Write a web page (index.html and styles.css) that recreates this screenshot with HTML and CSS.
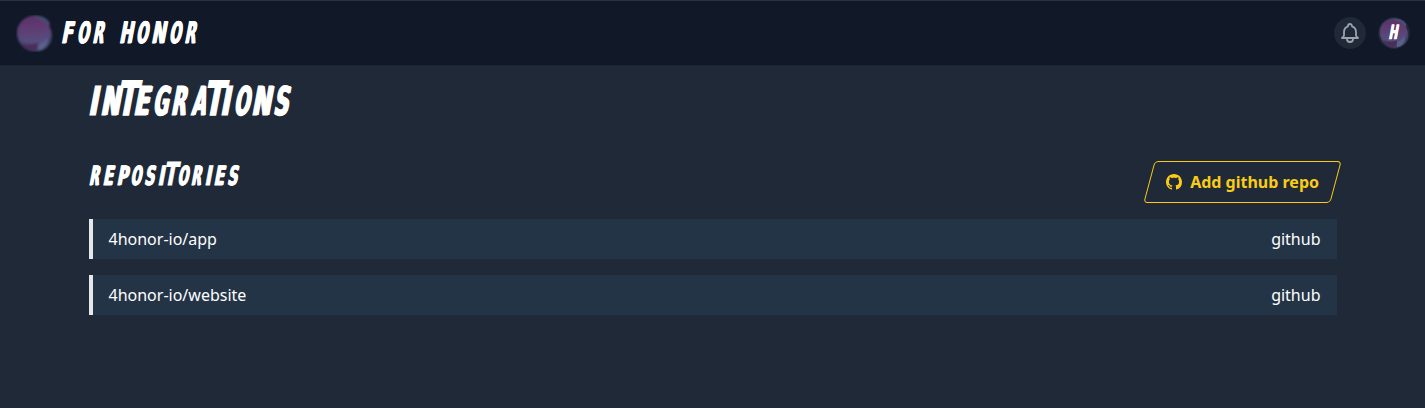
FILE: index.html
```html
<!DOCTYPE html>
<html lang="en">
<head>
<meta charset="utf-8">
<title>For Honor</title>
<link rel="stylesheet" href="styles.css">
</head>
<body>
<svg class="defs" width="0" height="0" aria-hidden="true">
  <defs>
    <linearGradient id="orb-fill" x1=".45" y1="0" x2=".55" y2="1">
      <stop offset="0" stop-color="#60306b"/><stop offset=".35" stop-color="#5f3a71"/><stop offset="1" stop-color="#56507f"/>
    </linearGradient>
    <filter id="soft" x="-20%" y="-20%" width="140%" height="140%"><feGaussianBlur stdDeviation=".8"/></filter>
    <symbol id="orb" viewBox="0 0 36 36">
      <g filter="url(#soft)">
        <path d="M16 .7C23-.4 30 2.6 33 8.4L32 11C36 16 36 23 33 28C29 35 20 37 13 34.7C6 32 1 26 .8 18C.7 9 7 2 16 .7Z" fill="#43436a"/>
        <path d="M15 2C24 1 31 6 33 12C35 19 32 24 27 28C20 27 13 29 5 26C-1 18 1 5 15 2Z" fill="url(#orb-fill)"/>
        <path d="M5 28C12 30 18 28 22 27C22 31 20 34 17 35C11 34 7 32 5 28Z" fill="#4c2d59"/>
        <path d="M18 1C25 0 32 4 33 9L30 10C28 6 24 4 17 2Z" fill="#474d73"/>
        <path d="M22 28C25 28 28 26 31 22C32 28 28 34 22 35C21 32 21 30 22 28Z" fill="#59618b"/>
      </g>
    </symbol>
  </defs>
</svg>
<header class="topbar">
  <a class="brand">
    <svg class="brand-mark" aria-hidden="true"><use href="#orb"/></svg>
    <span class="display brand-name"><span class="word"><i class="f">F</i><i class="o">O</i><i class="r">R</i></span> <span class="word"><i class="h">H</i><i class="o">O</i><i class="n">N</i><i class="o">O</i><i class="r">R</i></span></span>
  </a>
  <div class="actions">
    <button class="bell" aria-label="Notifications">
      <svg width="24" height="24" viewBox="0 0 24 24" fill="none" stroke="currentColor" stroke-width="1.8" stroke-linecap="round" stroke-linejoin="round"><path d="M15 17h5l-1.4-1.4A2 2 0 0 1 18 14.2V11a6 6 0 0 0-4-5.66V5a2 2 0 1 0-4 0v.34A6 6 0 0 0 6 11v3.2a2 2 0 0 1-.6 1.4L4 17h5m6 0v1a3 3 0 1 1-6 0v-1m6 0H9"/></svg>
    </button>
    <div class="avatar">
      <svg class="avatar-orb" aria-hidden="true"><use href="#orb"/></svg>
      <span class="display avatar-letter"><i class="h">H</i></span>
    </div>
  </div>
</header>
<main class="content">
  <h1 class="display title"><i class="i">I</i><i class="n">N</i><i class="t">T</i><i class="e">E</i><i class="g">G</i><i class="r">R</i><i class="a">A</i><i class="t">T</i><i class="i">I</i><i class="o">O</i><i class="n">N</i><i class="s">S</i></h1>
  <div class="section-head">
    <h2 class="display subtitle"><i class="r">R</i><i class="e">E</i><i class="p">P</i><i class="o">O</i><i class="s">S</i><i class="i">I</i><i class="t">T</i><i class="o">O</i><i class="r">R</i><i class="i">I</i><i class="e">E</i><i class="s">S</i></h2>
    <button class="add">
      <svg width="16" height="16" viewBox="0 0 16 16" fill="currentColor" aria-hidden="true"><path d="M8 0C3.58 0 0 3.58 0 8c0 3.54 2.29 6.53 5.47 7.59.4.07.55-.17.55-.38 0-.19-.01-.82-.01-1.49-2.01.37-2.53-.49-2.69-.94-.09-.23-.48-.94-.82-1.13-.28-.15-.68-.52-.01-.53.63-.01 1.08.58 1.23.82.72 1.21 1.87.87 2.33.66.07-.52.28-.87.51-1.07-1.78-.2-3.64-.89-3.64-3.95 0-.87.31-1.59.82-2.15-.08-.2-.36-1.02.08-2.12 0 0 .67-.21 2.2.82.64-.18 1.32-.27 2-.27s1.36.09 2 .27c1.53-1.04 2.2-.82 2.2-.82.44 1.1.16 1.92.08 2.12.51.56.82 1.27.82 2.15 0 3.07-1.87 3.75-3.65 3.95.29.25.54.73.54 1.48 0 1.07-.01 1.93-.01 2.2 0 .21.15.46.55.38A8.01 8.01 0 0 0 16 8c0-4.42-3.58-8-8-8z"/></svg>
      <span>Add github repo</span>
    </button>
  </div>
  <ul class="repos">
    <li class="repo"><span>4honor-io/app</span><span>github</span></li>
    <li class="repo"><span>4honor-io/website</span><span>github</span></li>
  </ul>
</main>
</body>
</html>
```
FILE: styles.css
```css
* { box-sizing: border-box; }
body {
  margin: 0;
  min-height: 100vh;
  background: #1f2937;
  color: #fff;
  font: 16px/24px "Noto Sans", sans-serif;
}
.defs { display: block; height: 0; }
button { padding: 0; border: 0; background: none; font: inherit; color: inherit; }

.topbar {
  display: flex;
  align-items: center;
  justify-content: space-between;
  height: 66px;
  padding: 0 15px 0 16px;
  background: #111827;
  border-top: 1px solid #293142;
  border-bottom: 1px solid #1c2534;
}
.brand { display: flex; align-items: center; }
.brand-mark { width: 37px; height: 37px; }
.actions { display: flex; align-items: center; gap: 12px; }
.bell {
  display: grid;
  place-items: center;
  width: 32px;
  height: 32px;
  border-radius: 50%;
  background: #1f2937;
  color: #9ca3af;
}
.avatar { display: grid; place-items: center; width: 32px; height: 32px; border-radius: 50%; background: #1f2937; }
.avatar > * { grid-area: 1 / 1; }
.avatar-orb { width: 30px; height: 30px; }

/* Condensed, slanted display lettering */
.display {
  display: flex;
  margin: 0;
  font-family: "DejaVu Sans", sans-serif;
  font-weight: 700;
  line-height: 1;
  white-space: nowrap;
  transform: skewX(-10.7deg);
  transform-origin: 0 .846em;
  -webkit-text-stroke: .03em #fff;
}
.word { display: flex; }
.display i {
  --dx: -.092em;
  --k: .6;
  display: block;
  width: var(--w);
  margin-right: var(--gap, .124em);
  font-style: normal;
  text-shadow: .035em 0 #fff, .07em 0 #fff;
  transform: scaleX(var(--k)) translateX(var(--dx));
  transform-origin: 0 .846em;
}
.display .a { --w: .36em; --k: .45; --dx: -.006em; }
.display .e { --w: .34em; --k: .56; }
.display .f { --w: .34em; --k: .56; }
.display .g { --w: .36em; --k: .47; --dx: -.05em; }
.display .h { --w: .38em; --k: .54; }
.display .i { --w: .18em; --k: .74; text-shadow: none; }
.display .n { --w: .4em; --k: .57; }
.display .o { --w: .355em; --k: .46; --dx: -.05em; }
.display .p { --w: .35em; --k: .55; }
.display .r { --w: .36em; --k: .48; }
.display .s { --w: .34em; --k: .52; --dx: -.067em; }
.display .t { --w: .18em; text-shadow: none; transform: translateX(-.18em) scale(.75, 1.19); }

.brand-name { margin: 1px 0 0 9px; font-size: 29.5px; gap: .37em; --gap: .178em; }
.avatar-letter { margin-right: 2px; font-size: 19.5px; --gap: 0; }
.title { height: 45px; padding: 1px 0 0 1px; font-size: 39.5px; }
.subtitle { padding: 2px 0 0 1px; font-size: 26.5px; --gap: .172em; }

.content { padding: 15px 88px 0 89px; }
.section-head { display: flex; justify-content: space-between; margin-top: 35px; }
.add {
  position: relative;
  display: flex;
  align-items: center;
  gap: 8px;
  height: 42px;
  padding: 0 18px 0 16px;
  color: #facc15;
  font-weight: 700;
}
.add::before {
  content: "";
  position: absolute;
  inset: 0 1px 0 -1px;
  border: 1px solid #facc15;
  border-radius: 4px;
  transform: skewX(-15deg);
}
.repos { display: grid; gap: 16px; margin: 16px 0 0; padding: 0; list-style: none; }
.repo {
  display: flex;
  align-items: center;
  justify-content: space-between;
  height: 40px;
  padding: 0 16.5px 0 15.5px;
  background: #243447;
  border-left: 4px solid #e5e7eb;
}
```
